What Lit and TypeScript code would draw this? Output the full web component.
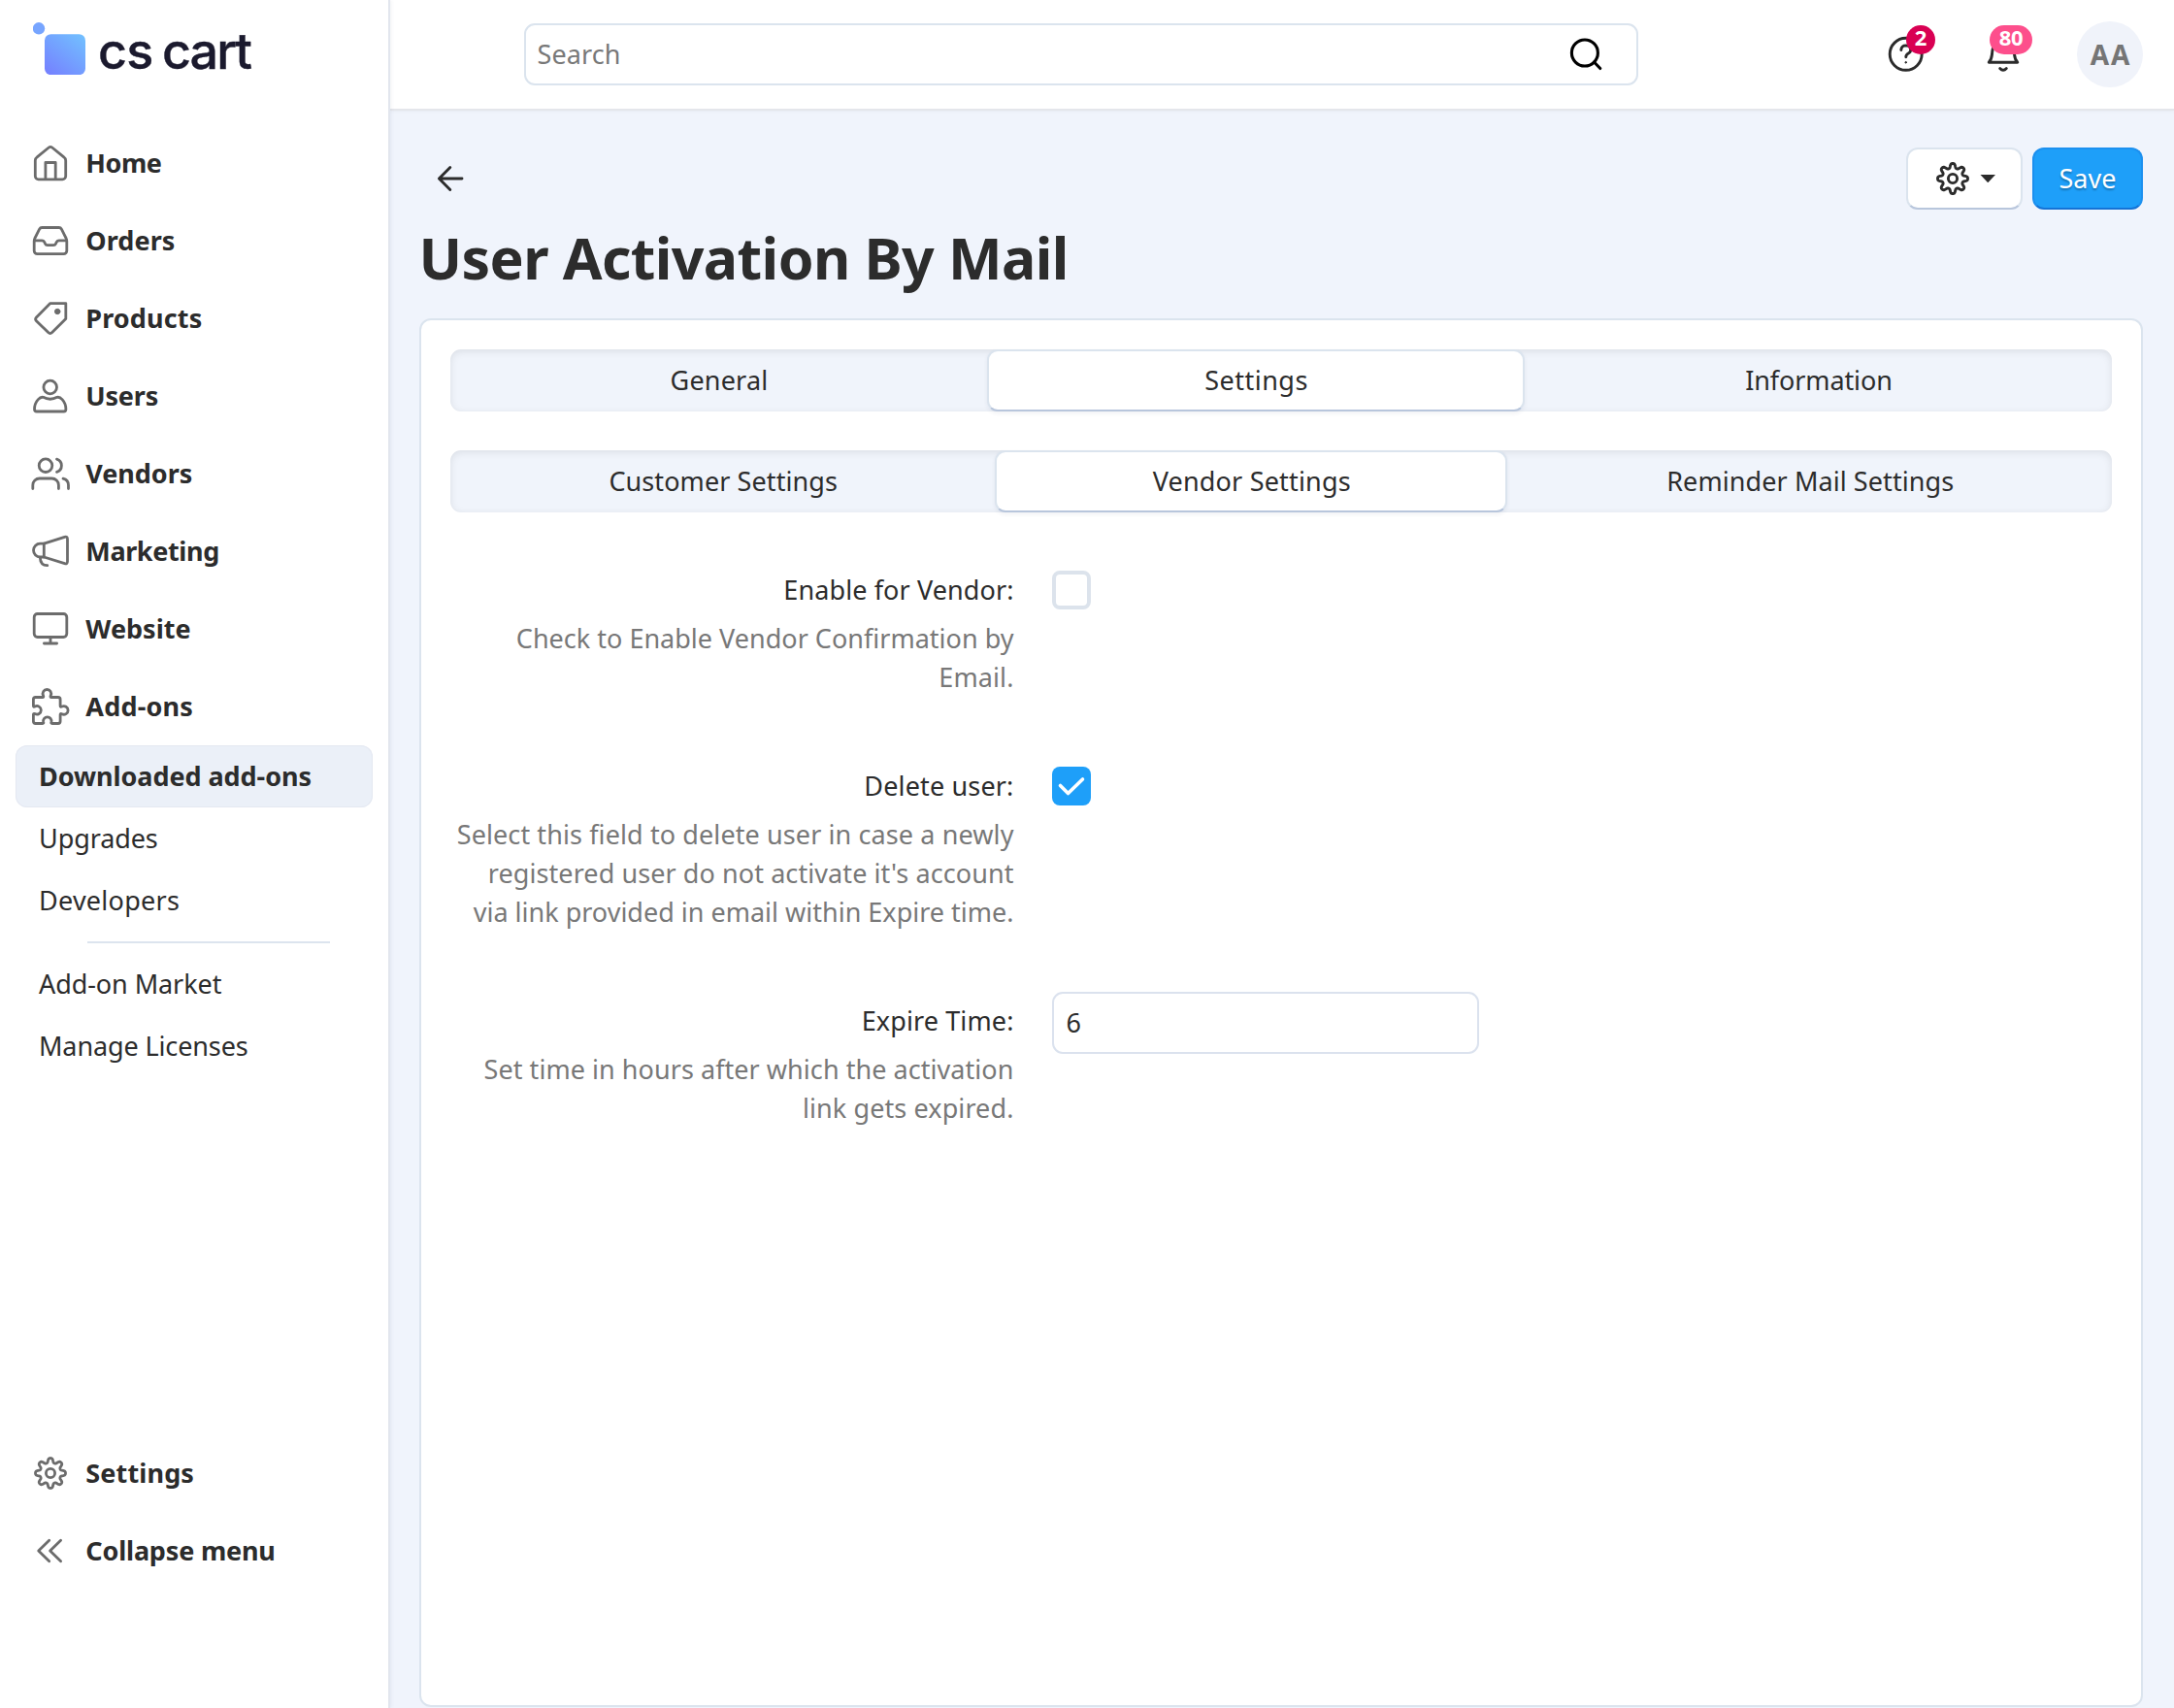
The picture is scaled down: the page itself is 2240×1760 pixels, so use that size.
import { LitElement, html, svg, css, type TemplateResult } from "lit";
import { customElement, property } from "lit/decorators.js";
import { classMap } from "lit/directives/class-map.js";

// Outline of an eight-lobed gear centred in a 40-unit box.
const gearPath = (() => {
  const points: string[] = [];
  const steps = 192;
  for (let i = 0; i < steps; i++) {
    const a = (i / steps) * Math.PI * 2;
    const wave = Math.tanh(1.5 * Math.cos(8 * a)) / Math.tanh(1.5);
    const r = 13.2 + 2.3 * wave;
    points.push(`${(20 + r * Math.cos(a)).toFixed(2)} ${(20 + r * Math.sin(a)).toFixed(2)}`);
  }
  return `M${points.join("L")}Z`;
})();

const ICONS: Record<string, TemplateResult> = {
  home: svg`<path d="M4.3 17.5q0-2.3 1.9-3.6L18.3 4q1.7-1.3 3.4 0l12.1 9.9q1.9 1.3 1.9 3.6V33.5a3.3 3.3 0 0 1-3.3 3.3H7.6a3.3 3.3 0 0 1-3.3-3.3Z"/><path d="M14.9 36.5V19.5h10.3v17"/>`,
  orders: svg`<path d="M3.2 20.5q0-1.5.7-3L8.6 8.2q.9-1.7 2.7-1.7h17.4q1.8 0 2.7 1.7l4.7 9.3q.7 1.5.7 3V30.5a3.2 3.2 0 0 1-3.2 3.2H6.4a3.2 3.2 0 0 1-3.2-3.2Z"/><path d="M3.5 19.8h7.7q1.7 0 2.5 1.5l.7 1.6q.8 1.7 2.5 1.7h6.2q1.7 0 2.5-1.7l.7-1.6q.8-1.5 2.5-1.5h7.7"/>`,
  products: svg`<path d="M19.8 4.6h16v15.8L21.7 34.6q-2 2-4 0L5.5 22.8q-1.8-1.9 0-3.9Z"/><circle class="solid" cx="27.2" cy="13" r="2.7"/>`,
  users: svg`<circle cx="19.7" cy="11" r="6.8"/><path d="M12.5 21.3q7.2 3.9 14.4 0 2.7-.5 5.2 2.3 3.8 4.1 3.8 10.2 0 2.2-2.2 2.2h-28q-2.2 0-2.2-2.2 0-6.1 3.8-10.2 2.5-2.8 5.2-2.3Z"/>`,
  vendors: svg`<circle cx="15" cy="11.7" r="6.8"/><path d="M1.8 35.5V32a7 7 0 0 1 7-7h12.6a7 7 0 0 1 7 7v3.5M26.5 5.2a6.9 6.9 0 0 1 0 13.2M33 25.2q5.5 1.3 5.5 6.8v3.5"/>`,
  marketing: svg`<path d="M13.3 12.2 34.6 5.4q2.9-.9 2.9 2v23.2q0 2.9-2.9 2L13.3 26Z"/><path d="M13.3 12.2H9.4a6.9 6.9 0 0 0 0 13.8h3.9M9.3 26.5q.3 8.2 7.5 8.2"/>`,
  website: svg`<rect x="3.2" y="4.5" width="33.6" height="24" rx="3.4"/><path d="M20 28.5V35M13.4 35h13.2"/>`,
  addons: svg`<path d="M2.4 12.7q0-2.2 2.2-2.2h7.2q1.5 0 .8-1.7a4.3 4.3 0 1 1 7.6 0q-.7 1.7.8 1.7h6.9q2.2 0 2.2 2.2v6.6q0 1.6 1.7.8a4.3 4.3 0 1 1 0 7.6q-1.7-.8-1.7.8v6.8q0 2.2-2.2 2.2h-6.2q-1.4 0-.8-1.5a4.2 4.2 0 1 0-8.2 0q.6 1.5-.8 1.5H4.6q-2.2 0-2.2-2.2v-6.8q0-1.5 1.6-.9a4.3 4.3 0 1 0 0-7.6q-1.6.8-1.6-.7Z"/>`,
  gear: svg`<path d=${gearPath}/><circle cx="20" cy="20" r="4.6"/>`,
  collapse: svg`<path d="M18.7 9.3 7.7 20l11 10.8M30.6 9.3 19.6 20l11 10.8"/>`,
  back: svg`<path d="M32 20H8.8M19.8 8.5 8.4 20l11.4 11.5"/>`,
  search: svg`<circle cx="18.9" cy="18.5" r="13.5"/><path d="m28.5 28 6.3 6.5"/>`,
  help: svg`<circle cx="19.7" cy="19.8" r="16.5"/><path d="M14.8 15.5q.5-4.6 5-4.6 4.7.2 4.9 4.3 0 2.5-2.4 3.8-2.5 1.4-2.5 3.7"/><circle class="solid" cx="19.7" cy="28.3" r=".8"/>`,
  bell: svg`<path d="M8.5 20q.4-13.5 11.5-13.5T31.5 20q.6 5.5 3.3 8.3H5.2Q7.9 25.5 8.5 20ZM16.7 34.5q3.3 3.6 6.6 0"/>`,
  check: svg`<path d="m8.5 19.5 8 8L31.5 13"/>`,
};

@customElement("ui-icon")
class UiIcon extends LitElement {
  @property() name = "home";
  static styles = css`
    :host { display: block; width: 40px; height: 40px; flex: none; }
    svg {
      display: block; width: 100%; height: 100%; overflow: visible; fill: none;
      stroke: currentColor; stroke-width: var(--stroke, 2.8);
      stroke-linecap: round; stroke-linejoin: round;
    }
    .solid { fill: currentColor; stroke-width: 1; }
  `;
  render() {
    return html`<svg viewBox="0 0 40 40" aria-hidden="true">${ICONS[this.name]}</svg>`;
  }
}

interface Item { label: string; icon?: string; active?: boolean; track: number }

const MENU: Item[] = [
  { label: "Home", icon: "home", track: -0.45 },
  { label: "Orders", icon: "orders", track: 0.07 },
  { label: "Products", icon: "products", track: 0.13 },
  { label: "Users", icon: "users", track: -0.2 },
  { label: "Vendors", icon: "vendors", track: -0.05 },
  { label: "Marketing", icon: "marketing", track: -0.38 },
  { label: "Website", icon: "website", track: 0.02 },
  { label: "Add-ons", icon: "addons", track: 0.19 },
];
const ADDONS: Item[] = [
  { label: "Downloaded add-ons", active: true, track: -0.06 },
  { label: "Upgrades", track: -0.1 },
  { label: "Developers", track: 0.25 },
];
const LINKS: Item[] = [
  { label: "Add-on Market", track: -0.08 },
  { label: "Manage Licenses", track: -0.12 },
];
const FOOTER: Item[] = [
  { label: "Settings", icon: "gear", track: 0.13 },
  { label: "Collapse menu", icon: "collapse", track: -0.18 },
];
const TABS: Item[] = [
  { label: "General", track: 0.18 },
  { label: "Settings", active: true, track: 0.5 },
  { label: "Information", track: -0.1 },
];
const SUBTABS: Item[] = [
  { label: "Customer Settings", track: 0.09 },
  { label: "Vendor Settings", active: true, track: 0.18 },
  { label: "Reminder Mail Settings", track: 0.08 },
];

const text = (label: string, track: number) =>
  html`<span style="letter-spacing:${track}px">${label}</span>`;

@customElement("side-bar")
class SideBar extends LitElement {
  static styles = css`
    :host {
      display: flex; flex-direction: column; box-sizing: border-box; width: 402px;
      background: #fff; border-right: 2px solid #e2e6ee; box-shadow: 1px 0 4px rgba(60, 80, 120, 0.08);
      padding-bottom: 122px;
    }
    .logo { display: flex; height: 128px; padding-left: 34px; box-sizing: border-box; }
    .mark { width: 54px; height: 54px; margin-top: 23px; flex: none; }
    .word {
      display: flex; gap: 9.5px; margin: 21px 0 0 13px; font: 500 52px/64px Inter, sans-serif; color: #1b1a2e;
      letter-spacing: -0.8px; white-space: nowrap; -webkit-text-stroke: 0.4px #1b1a2e;
    }
    .word .tight { letter-spacing: -1.9px; }
    .item { display: flex; align-items: center; gap: 16.3px; height: 80px; padding-left: 32px; font-weight: 700; }
    .item ui-icon { color: #6c6c6c; }
    .sub {
      display: flex; align-items: center; box-sizing: border-box; height: 64px; margin: 0 16px;
      padding-left: 24px; border-radius: 12px;
    }
    .sub.active { background: #ebf0f8; font-weight: 700; box-shadow: inset 0 0 0 1px #e4e8f1; }
    .rule { height: 2px; width: 250px; margin: 10px 0 10px 90px; background: #dce4ee; }
    .space { flex: 1; }
  `;
  item(i: Item) {
    return html`<div class="item"><ui-icon name=${i.icon!}></ui-icon>${text(i.label, i.track)}</div>`;
  }
  sub(i: Item) {
    return html`<div class=${classMap({ sub: true, active: !!i.active })}>${text(i.label, i.track)}</div>`;
  }
  render() {
    return html`
      <div class="logo">
        <svg class="mark" viewBox="0 0 54 54">
          <defs>
            <linearGradient id="g" x1="0.1" y1="1" x2="0.9" y2="0">
              <stop offset="0" stop-color="#7581ff" />
              <stop offset="1" stop-color="#72bfff" />
            </linearGradient>
          </defs>
          <circle cx="6" cy="6.3" r="6.2" fill="#77a5ff" />
          <rect x="12" y="12.2" width="42" height="42" rx="6.5" fill="url(#g)" />
        </svg>
        <div class="word"><span>cs</span> <span class="tight">cart</span></div>
      </div>
      ${MENU.map((i) => this.item(i))} ${ADDONS.map((i) => this.sub(i))}
      <div class="rule"></div>
      ${LINKS.map((i) => this.sub(i))}
      <div class="space"></div>
      ${FOOTER.map((i) => this.item(i))}
    `;
  }
}

@customElement("top-bar")
class TopBar extends LitElement {
  static styles = css`
    :host {
      display: flex; align-items: center; box-sizing: border-box; height: 114px;
      padding: 0 32px 0 138px; background: #fff; border-bottom: 2px solid #e4e6eb;
      box-shadow: 0 1px 3px rgba(0, 0, 0, 0.04);
    }
    .search {
      display: flex; align-items: center; justify-content: space-between; box-sizing: border-box;
      width: 1148px; height: 64px; padding: 0 32px 0 11.5px; border: 2px solid #dbe4ee; border-radius: 11px;
      color: #787878; letter-spacing: 0.1px;
    }
    .search ui-icon { color: #000; --stroke: 3.1; }
    .tools { display: flex; align-items: center; margin-left: auto; color: #2b2b2b; --stroke: 2.9; }
    .tool { position: relative; margin-right: 60px; }
    .tool.last { margin-right: 56px; }
    .badge {
      position: absolute; top: -10px; left: 20px; width: 30px; height: 30px; border-radius: 15px;
      background: #d90053; color: #fff; font-size: 22px; line-height: 25px; font-weight: 700; text-align: center;
      letter-spacing: -0.3px;
    }
    .badge.wide { left: 6px; width: 44px; background: #fd4f8c; }
    .avatar {
      width: 68px; height: 68px; border-radius: 50%; background: #f0f3fa; color: #757575; font-size: 28px;
      font-weight: 700; line-height: 68px; text-align: center; letter-spacing: 1.8px; text-indent: 1.8px;
    }
  `;
  render() {
    return html`
      <div class="search"><span>Search</span><ui-icon name="search"></ui-icon></div>
      <div class="tools">
        <div class="tool"><ui-icon name="help"></ui-icon><div class="badge">2</div></div>
        <div class="tool last"><ui-icon name="bell"></ui-icon><div class="badge wide">80</div></div>
        <div class="avatar">AA</div>
      </div>
    `;
  }
}

@customElement("settings-card")
class SettingsCard extends LitElement {
  static styles = css`
    :host {
      display: block; box-sizing: border-box; padding: 30px; background: #fff;
      border: 2px solid #dbe4ee; border-radius: 12px;
    }
    .tabs {
      display: grid; height: 64px; border-radius: 11px; background: #f0f4fb;
      box-shadow: inset 0 2px 8px rgba(0, 0, 0, 0.09);
    }
    .main { grid-template-columns: 553px 554px 1fr; }
    .main .tab { padding-left: 1px; }
    .second { grid-template-columns: 561px 528px 1fr; margin-top: 40px; }
    .second .tab { padding-left: 1.5px; }
    .tab { display: flex; align-items: center; justify-content: center; box-sizing: border-box; }
    .tab.active {
      background: #fff; border: 2px solid #dbe4ee; border-bottom-color: #b8c6dc; border-radius: 11px;
      box-shadow: 0 2px 4px rgba(40, 60, 100, 0.07);
    }
    .form { display: grid; gap: 62px; padding-top: 50px; }
    .row { display: grid; grid-template-columns: 580.5px 1fr; gap: 39.5px; align-items: start; }
    .caption { padding-top: 10px; text-align: right; white-space: nowrap; line-height: 40px; }
    .help { margin-top: 10px; color: #787878; }
    .line { display: block; }
    .box {
      box-sizing: border-box; width: 40px; height: 40px; margin-top: 10px;
      border: 4px solid #dce3ec; border-radius: 8px;
    }
    .box.on { border: 0; background: #1e9ff9; color: #fff; --stroke: 3.6; }
    .input {
      display: flex; align-items: center; box-sizing: border-box; width: 440px; height: 64px;
      padding-left: 12.5px; border: 2px solid #dbe2ee; border-radius: 11px;
    }
  `;
  tabs(items: Item[], kind: string) {
    return html`<div class="tabs ${kind}">
      ${items.map((t) => html`<div class=${classMap({ tab: true, active: !!t.active })}>${text(t.label, t.track)}</div>`)}
    </div>`;
  }
  row(label: string, track: number, help: [string, number][], field: TemplateResult) {
    return html`<div class="row">
      <div class="caption">
        ${text(label, track)}
        <div class="help">${help.map(([l, t]) => html`<span class="line">${text(l, t)}</span>`)}</div>
      </div>
      ${field}
    </div>`;
  }
  render() {
    return html`
      ${this.tabs(TABS, "main")} ${this.tabs(SUBTABS, "second")}
      <div class="form">
        ${this.row("Enable for Vendor:", 0.1,
          [["Check to Enable Vendor Confirmation by", 0.01], ["Email.", 0.1]],
          html`<div class="box"></div>`)}
        ${this.row("Delete user:", 0.15,
          [["Select this field to delete user in case a newly", 0.1],
           ["registered user do not activate it's account", 0.08],
           ["via link provided in email within Expire time.", 0]],
          html`<div class="box on"><ui-icon name="check"></ui-icon></div>`)}
        ${this.row("Expire Time:", 0.12,
          [["Set time in hours after which the activation", 0.05], ["link gets expired.", 0.1]],
          html`<div class="input">6</div>`)}
      </div>
    `;
  }
}

@customElement("app-root")
class AppRoot extends LitElement {
  static styles = css`
    :host {
      display: grid; grid-template-columns: 402px 1fr; width: 2240px; height: 1760px; overflow: hidden;
      background: #f0f4fc; color: #2c2c2c; font: 400 27px/40px "Noto Sans", "Open Sans", sans-serif;
    }
    side-bar { position: relative; z-index: 1; }
    .main { display: flex; flex-direction: column; min-width: 0; }
    .content { display: flex; flex-direction: column; flex: 1; padding: 38px 32px 0 30px; }
    .toolbar { display: flex; align-items: center; gap: 10px; height: 64px; }
    .back { margin: 0 auto 0 12px; --stroke: 2.9; }
    .btn {
      display: flex; align-items: center; justify-content: center; box-sizing: border-box; height: 64px;
      border: 2px solid #dbe4ee; border-bottom-color: #b8c6dc; border-radius: 12px; background: #fff;
    }
    .gear { width: 120px; gap: 8.5px; --stroke: 2.9; }
    .caret { width: 16px; height: 8.5px; background: #2c2c2c; clip-path: polygon(0 0, 100% 0, 50% 100%); }
    .save {
      width: 114px; background: #1e9ff9; border-color: #1c90ef; border-bottom-color: #1473d6; color: #fff;
      text-shadow: 0 2px 2px rgba(0, 0, 0, 0.28);
    }
    h1 {
      margin: 9px 0 23px -0.5px; font-size: 59px; line-height: 80px; font-weight: 700; letter-spacing: -0.6px;
      white-space: nowrap;
    }
    settings-card { flex: 1; margin-bottom: 1px; }
  `;
  render() {
    return html`
      <side-bar></side-bar>
      <div class="main">
        <top-bar></top-bar>
        <div class="content">
          <div class="toolbar">
            <ui-icon class="back" name="back"></ui-icon>
            <div class="btn gear"><ui-icon name="gear"></ui-icon><span class="caret"></span></div>
            <div class="btn save">Save</div>
          </div>
          <h1>User Activation By Mail</h1>
          <settings-card></settings-card>
        </div>
      </div>
    `;
  }
}
